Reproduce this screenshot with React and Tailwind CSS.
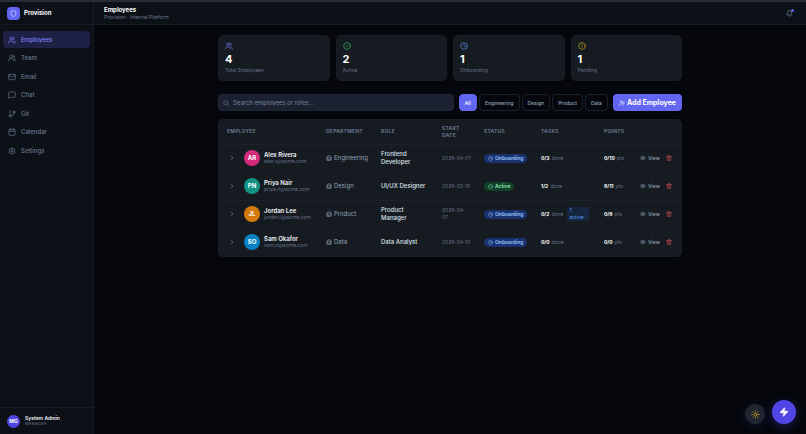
import React, { useState } from 'react';
import {
    Users, UsersRound, Mail, MessageSquare, GitBranch, Calendar, Settings, Shield, Bell, Search,
    CircleCheck, Clock, CircleAlert, UserPlus, ChevronRight, Building2, Eye, Trash2, Sun, Zap,
} from 'lucide-react';

const navItems = [
    { label: 'Employees', icon: Users, active: true },
    { label: 'Team', icon: UsersRound },
    { label: 'Email', icon: Mail },
    { label: 'Chat', icon: MessageSquare },
    { label: 'Git', icon: GitBranch },
    { label: 'Calendar', icon: Calendar },
    { label: 'Settings', icon: Settings },
];

const stats = [
    { label: 'Total Employees', value: 4, icon: Users, color: 'text-[#7577f0]' },
    { label: 'Active', value: 2, icon: CircleCheck, color: 'text-[#35b866]' },
    { label: 'Onboarding', value: 1, icon: Clock, color: 'text-[#5392ea]' },
    { label: 'Pending', value: 1, icon: CircleAlert, color: 'text-[#cfad16]' },
];

const filters = ['All', 'Engineering', 'Design', 'Product', 'Data'];

const employees = [
    { initials: 'AR', name: 'Alex Rivera', email: 'alex.r@acme.com', dept: 'Engineering', role: 'Frontend Developer', start: '2026-04-01', status: 'Onboarding', tasks: '0/3', points: '0/10', avatar: 'bg-[#d42a7b]' },
    { initials: 'PN', name: 'Priya Nair', email: 'priya.n@acme.com', dept: 'Design', role: 'UI/UX Designer', start: '2026-03-15', status: 'Active', tasks: '1/2', points: '8/11', avatar: 'bg-[#119283]' },
    { initials: 'JL', name: 'Jordan Lee', email: 'jordan.l@acme.com', dept: 'Product', role: 'Product Manager', start: '2026-04-07', status: 'Onboarding', tasks: '0/2', running: '1 active', points: '0/8', avatar: 'bg-[#d5790c]' },
    { initials: 'SO', name: 'Sam Okafor', email: 'sam.o@acme.com', dept: 'Data', role: 'Data Analyst', start: '2026-04-10', status: 'Onboarding', tasks: '0/0', points: '0/0', avatar: 'bg-[#0882c4]' },
];

const StatusBadge = ({ status }) => {
    const isActive = status === 'Active';
    const Icon = isActive ? CircleCheck : Clock;
    return (
        <span className={`inline-flex items-center gap-[2px] h-[9px] px-1 rounded-full text-[5px] font-semibold ${isActive ? 'bg-[#12412a] text-[#86efac]' : 'bg-[#1a3270] text-[#9cc6ff]'}`}>
            <Icon size={5} /> {status}
        </span>
    );
};

const Sidebar = () => (
    <aside className="w-[94px] shrink-0 flex flex-col bg-[#0c1017] border-r border-[#171c27]">
        <div className="h-[23px] flex items-center gap-1 px-[7px] border-b border-[#171c27]">
            <span className="w-[13px] h-[13px] rounded-[4px] bg-[#6366f1] text-white flex items-center justify-center">
                <Shield size={7} />
            </span>
            <span className="text-[6px] font-bold text-white">Provision</span>
        </div>
        <nav className="h-32 mx-[3px] mt-[6px] flex flex-col justify-between">
            {navItems.map(({ label, icon: Icon, active }) => (
                <a key={label} href="#" className={`h-[17px] px-[5px] flex items-center gap-[5px] rounded-[4px] text-[6px] font-medium ${active ? 'bg-[#1e2145] text-[#7f82fa]' : 'text-[#6b788e]'}`}>
                    <Icon size={8} /> {label}
                </a>
            ))}
        </nav>
        <div className="mt-auto h-[27px] px-[7px] flex items-center gap-[5px] border-t border-[#171c27]">
            <span className="w-[13px] h-[13px] rounded-full bg-[#4f46e5] text-white text-[5px] font-bold flex items-center justify-center">MG</span>
            <div className="leading-[6px]">
                <p className="text-[5px] font-semibold text-[#f1f5f9]">System Admin</p>
                <p className="text-[4px] text-[#748096] uppercase tracking-wider">Manager</p>
            </div>
        </div>
    </aside>
);

const EmployeeRow = ({ emp }) => (
    <tr className="h-7 border-t border-[#1b212a]">
        <td className="pl-[9px]">
            <div className="flex items-center">
                <button aria-label={`Expand ${emp.name}`} className="mr-2 text-[#64748b]"><ChevronRight size={8} /></button>
                <span className={`w-4 h-4 rounded-full text-white text-[6px] font-bold flex items-center justify-center ${emp.avatar}`}>{emp.initials}</span>
                <div className="ml-1 leading-[7px]">
                    <p className="text-[6px] font-semibold text-[#f1f5f9]">{emp.name}</p>
                    <p className="text-[5px] text-[#64718a]">{emp.email}</p>
                </div>
            </div>
        </td>
        <td className="pl-[5px] text-[6px] text-[#94a3b8]">
            <span className="flex items-center gap-[2px]"><Building2 size={6} className="text-[#8a96a9]" /> {emp.dept}</span>
        </td>
        <td className="pl-[5px] pr-2 text-[6px] font-medium text-[#dbe2ec]">
            {/* UI/UX stays on one line, longer titles wrap */}
            <span className={emp.role.includes('/') ? 'whitespace-nowrap' : ''}>{emp.role}</span>
        </td>
        <td className="pl-[5px] pr-2 text-[5px] leading-[7px] text-[#64718a]">{emp.start}</td>
        <td className="pl-[5px]"><StatusBadge status={emp.status} /></td>
        <td className="pl-[5px] pr-2 text-[5px] text-[#64718a]">
            <div className="flex items-center gap-1">
                <span className="flex gap-[2px]"><b className="text-white">{emp.tasks}</b> done</span>
                {emp.running && <span className="w-[22px] pl-[2px] pr-1 leading-[7px] rounded-[2px] bg-[#162640] text-[#5b9df5]">{emp.running}</span>}
            </div>
        </td>
        <td className="pl-[5px] text-[5px] text-[#64718a]">
            <span className="flex gap-[2px]"><b className="text-white">{emp.points}</b> pts</span>
        </td>
        <td className="pl-[5px] pr-[9px]">
            <div className="flex items-center justify-between text-[#94a3b8]">
                <button className="flex items-center gap-[2px] text-[5px] font-medium"><Eye size={6} /> View</button>
                <button aria-label={`Delete ${emp.name}`} className="text-[#dc5358]"><Trash2 size={6} /></button>
            </div>
        </td>
    </tr>
);

const App = () => {
    const [filter, setFilter] = useState('All');
    const [query, setQuery] = useState('');

    const visible = employees.filter((e) => (
        (filter === 'All' || e.dept === filter) &&
        `${e.name} ${e.role}`.toLowerCase().includes(query.toLowerCase())
    ));

    return (
        <div className="min-h-screen flex flex-col bg-[#05070c] border-t-2 border-[#262c36] font-['Inter',sans-serif] leading-[8px] text-[6px]">
            <div className="flex-1 flex">
                <Sidebar />
                <div className="flex-1 min-w-0">
                    <header className="h-[23px] pl-[10px] pr-[13px] flex items-center justify-between bg-[#0c1017] border-b border-[#171c27]">
                        <div className="leading-[7px]">
                            <h1 className="text-[6px] font-bold text-white">Employees</h1>
                            <p className="text-[5px] leading-[8px] text-[#6b788e]">Provision · Internal Platform</p>
                        </div>
                        <button aria-label="Notifications" className="relative text-[#8f9bae]">
                            <Bell size={7} />
                            <span className="absolute -top-px -right-px w-[3px] h-[3px] rounded-full bg-[#6366f1]" />
                        </button>
                    </header>

                    <main className="max-w-[464px] mx-auto pt-[10px]">
                        <div className="grid grid-cols-4 gap-[6px]">
                            {stats.map(({ label, value, icon: Icon, color }) => (
                                <div key={label} className="h-[46px] px-[6px] pt-[6px] rounded-[5px] bg-[#161b21] border border-[#181e25]">
                                    <Icon size={8} className={color} />
                                    <p className="mt-[3px] text-[11px] leading-[12px] font-bold text-white">{value}</p>
                                    <p className="mt-px text-[5px] text-[#64718a]">{label}</p>
                                </div>
                            ))}
                        </div>

                        <div className="mt-[13px] h-[17px] flex gap-[5px]">
                            <label className="flex-1 flex items-center gap-1 px-1 rounded-[4px] bg-[#1b2130] border border-[#1e2534] text-[#76859c]">
                                <Search size={6} />
                                <input aria-label="Search employees or roles" value={query} onChange={(e) => setQuery(e.target.value)} placeholder="Search employees or roles..." className="flex-1 min-w-0 bg-transparent outline-none text-[6px] text-white placeholder:text-[#76859c]" />
                            </label>
                            <div className="flex gap-[2px]">
                                {filters.map((f) => (
                                    <button key={f} onClick={() => setFilter(f)} className={`px-[5px] rounded-[4px] border text-[5px] font-medium ${f === filter ? 'bg-[#6366f1] border-[#6366f1] text-white' : 'border-[#1b212a] text-[#94a3b8]'}`}>
                                        {f}
                                    </button>
                                ))}
                            </div>
                            <button className="px-[6px] flex items-center gap-[2px] rounded-[4px] bg-[#6366f1] text-white text-[7px] font-bold">
                                <UserPlus size={6} /> Add Employee
                            </button>
                        </div>

                        <div className="mt-2 rounded-[5px] bg-[#161b21] border border-[#181e25] overflow-hidden">
                            <table className="w-full table-fixed text-left">
                                <colgroup>
                                    <col className="w-[102px]" />
                                    <col className="w-[55px]" />
                                    <col className="w-[61px]" />
                                    <col className="w-[42px]" />
                                    <col className="w-[57px]" />
                                    <col className="w-[63px]" />
                                    <col className="w-[36px]" />
                                    <col />
                                </colgroup>
                                <thead>
                                    <tr className="h-6 text-[5px] leading-[7px] uppercase tracking-wider text-[#6f7f97]">
                                        <th className="pl-2 font-semibold">Employee</th>
                                        <th className="pl-[5px] font-semibold">Department</th>
                                        <th className="pl-[5px] font-semibold">Role</th>
                                        <th className="pl-[5px] pr-2 font-semibold">Start Date</th>
                                        <th className="pl-[5px] font-semibold">Status</th>
                                        <th className="pl-[5px] font-semibold">Tasks</th>
                                        <th className="pl-[5px] font-semibold">Points</th>
                                        <th aria-label="Actions" />
                                    </tr>
                                </thead>
                                <tbody>
                                    {visible.map((emp) => <EmployeeRow key={emp.email} emp={emp} />)}
                                </tbody>
                            </table>
                        </div>
                    </main>
                </div>
            </div>

            {/* Floating actions */}
            <div className="fixed bottom-[10px] right-[10px] flex items-end gap-[7px]">
                <button aria-label="Toggle theme" className="w-5 h-5 rounded-full bg-[#1e252f] border border-[#222a34] text-[#dba82c] flex items-center justify-center shadow-[0_2px_8px_#10142c]"><Sun size={9} /></button>
                <button aria-label="Quick actions" className="w-6 h-6 rounded-full bg-[#4f46e5] text-white flex items-center justify-center shadow-[0_2px_10px_#1f1c5c]"><Zap size={10} fill="currentColor" /></button>
            </div>
        </div>
    );
};

export default App;
